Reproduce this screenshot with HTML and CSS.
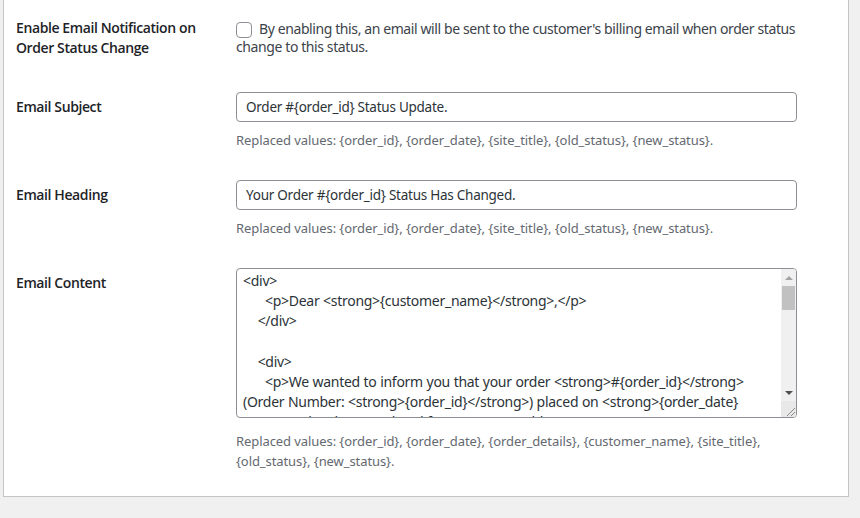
FILE: index.html
```html
<!DOCTYPE html>
<html lang="en">
<head>
<meta charset="utf-8">
<title>Email Notification Settings</title>
<link rel="stylesheet" href="styles.css">
</head>
<body>
<div class="panel">
  <div class="row">
    <div class="th">Enable Email Notification on Order Status Change</div>
    <div class="td td-check">
      <label class="check-label"><input type="checkbox" class="check">By enabling this, an email will be sent to the customer's billing email when order status change to this status.</label>
    </div>
  </div>
  <div class="row">
    <div class="th">Email Subject</div>
    <div class="td">
      <input type="text" class="text-input" value="Order #{order_id} Status Update.">
      <p class="desc">Replaced values: {order_id}, {order_date}, {site_title}, {old_status}, {new_status}.</p>
    </div>
  </div>
  <div class="row">
    <div class="th">Email Heading</div>
    <div class="td">
      <input type="text" class="text-input" value="Your Order #{order_id} Status Has Changed.">
      <p class="desc">Replaced values: {order_id}, {order_date}, {site_title}, {old_status}, {new_status}.</p>
    </div>
  </div>
  <div class="row">
    <div class="th">Email Content</div>
    <div class="td">
      <div class="area-wrap">
        <textarea class="area"><div>
      <p>Dear <strong>{customer_name}</strong>,</p>
    </div>

    <div>
      <p>We wanted to inform you that your order <strong>#{order_id}</strong> (Order Number: <strong>{order_id}</strong>) placed on <strong>{order_date}</strong> has been updated from <strong>{old_status}</strong> to <strong>{new_status}</strong>.</p>
    </div></textarea>
        <div class="sb">
          <div class="sb-btn"><span class="tri-up"></span></div>
          <div class="sb-thumb"></div>
          <div class="sb-space"></div>
          <div class="sb-btn"><span class="tri-down"></span></div>
          <div class="sb-corner">
            <svg width="15" height="16" viewBox="0 0 15 16"><path d="M14 7 L6 15 M14 11 L10 15" stroke="#8a8a8a" stroke-width="1" fill="none"/></svg>
          </div>
        </div>
      </div>
      <p class="desc desc-area">Replaced values: {order_id}, {order_date}, {order_details}, {customer_name}, {site_title}, {old_status}, {new_status}.</p>
    </div>
  </div>
</div>
</body>
</html>
```
FILE: styles.css
```css
html, body {
  margin: 0;
  padding: 0;
}
body {
  background: #f0f0f1;
  font-family: "Noto Sans", "Open Sans", sans-serif;
  font-size: 14px;
  color: #3c434a;
}
.panel {
  margin: -2px 11px 0 3px;
  background: #fff;
  border: 1px solid #c3c4c7;
  border-top: none;
  padding: 0 12px 10px 12px;
}
.row {
  display: grid;
  grid-template-columns: 220px 561px;
}
.th {
  padding: 20px 10px 20px 0;
  font-family: "Open Sans", "Noto Sans", sans-serif;
  font-weight: 600;
  letter-spacing: -0.4px;
  color: #1d2327;
  line-height: 19.5px;
}
.td {
  padding: 15px 0;
}
.td-check {
  padding-top: 21.5px;
}
.check-label {
  display: block;
  width: 572px;
  line-height: 18.5px;
  letter-spacing: -0.4px;
  color: #3c434a;
}
.check {
  appearance: none;
  -webkit-appearance: none;
  width: 16px;
  height: 16px;
  margin: 0 7px 0 0;
  border: 1px solid #8c8f94;
  border-radius: 4px;
  background: #fff;
  vertical-align: middle;
  position: relative;
  top: 0;
}
.text-input {
  display: block;
  box-sizing: border-box;
  width: 561px;
  height: 30px;
  margin: 0;
  padding: 0 9px;
  border: 1px solid #8c8f94;
  border-radius: 4px;
  font: inherit;
  font-size: 13.5px;
  letter-spacing: -0.25px;
  color: #2c3338;
  background: #fff;
}
.desc {
  margin: 8px 0 0;
  font-size: 13px;
  line-height: 20px;
  letter-spacing: -0.08px;
  color: #646970;
}
.desc-area {
  margin-top: 13px;
}
.area-wrap {
  position: relative;
  width: 561px;
  height: 150px;
}
.area {
  display: block;
  box-sizing: border-box;
  width: 561px;
  height: 150px;
  margin: 0;
  padding: 2px 24px 0 6px;
  border: 1px solid #8c8f94;
  border-radius: 4px;
  font: inherit;
  font-size: 14px;
  line-height: 20.2px;
  letter-spacing: -0.28px;
  word-spacing: 0.3px;
  color: #2c3338;
  background: #fff;
  resize: none;
  overflow: hidden;
  white-space: pre-wrap;
}
.sb {
  position: absolute;
  top: 1px;
  right: 1px;
  bottom: 1px;
  width: 15px;
  background: #f0f0f0;
  display: flex;
  flex-direction: column;
  border-radius: 0 3px 3px 0;
  overflow: hidden;
}
.sb-btn {
  height: 17px;
  display: flex;
  align-items: center;
  justify-content: center;
  flex: none;
}
.tri-up {
  width: 0;
  height: 0;
  border-left: 4px solid transparent;
  border-right: 4px solid transparent;
  border-bottom: 4px solid #a3a3a3;
}
.tri-down {
  width: 0;
  height: 0;
  border-left: 4px solid transparent;
  border-right: 4px solid transparent;
  border-top: 4px solid #505050;
}
.sb-thumb {
  height: 24px;
  margin: 0 1px;
  background: #c1c1c1;
  flex: none;
}
.sb-space {
  flex: 1;
}
.sb-corner {
  height: 16px;
  flex: none;
  background: #e8e8e8;
  display: flex;
  justify-content: flex-end;
}
.sb-corner svg {
  display: block;
}
```
